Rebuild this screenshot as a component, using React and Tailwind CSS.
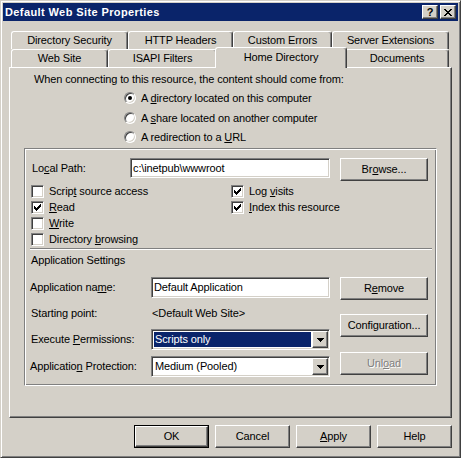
import React from "react";

const raised =
  "border border-t-white border-l-white border-r-[#404040] border-b-[#404040] shadow-[inset_-1px_-1px_#808080]";
const sunken =
  "border border-t-[#808080] border-l-[#808080] border-r-white border-b-white shadow-[inset_1px_1px_#404040,inset_-1px_-1px_#d4d0c8]";
const etched =
  "border border-t-[#808080] border-l-[#808080] border-r-white border-b-white shadow-[inset_1px_1px_#fff,inset_-1px_-1px_#808080]";

const topTabs = [
  { label: "Directory Security", w: "w-[117px]" },
  { label: "HTTP Headers", w: "w-[105px]" },
  { label: "Custom Errors", w: "w-[99px]" },
  { label: "Server Extensions", w: "w-[117px]" },
];

const bottomTabs = [
  { label: "Web Site", w: "w-[97px]" },
  { label: "ISAPI Filters", w: "w-[109px]" },
  { label: "Home Directory", w: "w-[132px]", active: true },
  { label: "Documents", w: "w-[104px]" },
];

const Tab = ({ label, w, active }) => (
  <div
    className={`${w} ${
      active ? "relative z-10 -mx-[2px] -mt-[2px] h-[21px] pb-[2px]" : "h-full"
    } bg-[#d4d0c8] border-t border-l border-r border-t-white border-l-white border-r-[#404040] shadow-[inset_-1px_0_#808080] rounded-t-[3px] flex items-center justify-center shrink-0`}
  >
    {label}
  </div>
);

const Button = ({ children, w = "w-[88px]", disabled, isDefault }) => (
  <div className={`${w} h-[23px] ${isDefault ? "border border-black" : ""}`}>
    <button
      type="button"
      className={`${raised} w-full h-full bg-[#d4d0c8] flex items-center justify-center ${
        disabled ? "text-[#808080] [text-shadow:1px_1px_0_#fff]" : "text-black"
      }`}
    >
      {children}
    </button>
  </div>
);

const Check = ({ checked }) => (
  <span className={`${sunken} w-[13px] h-[13px] bg-white shrink-0 flex items-center justify-center`}>
    {checked && (
      <svg width="7" height="7" viewBox="0 0 7 7" shapeRendering="crispEdges">
        <path
          d="M0 2h1v3H0zM1 3h1v3H1zM2 4h1v3H2zM3 3h1v3H3zM4 2h1v3H4zM5 1h1v3H5zM6 0h1v3H6z"
          fill="#000"
        />
      </svg>
    )}
  </span>
);

const Radio = ({ checked }) => (
  <span className="w-[12px] h-[12px] rounded-full bg-white border border-t-[#808080] border-l-[#808080] border-r-white border-b-white shadow-[inset_1px_1px_#404040,inset_-1px_-1px_#d4d0c8] flex items-center justify-center shrink-0">
    {checked && <span className="w-[4px] h-[4px] rounded-full bg-black" />}
  </span>
);

const Arrow = () => (
  <svg width="7" height="4" viewBox="0 0 7 4" shapeRendering="crispEdges">
    <path d="M0 0h7v1H0zM1 1h5v1H1zM2 2h3v1H2zM3 3h1v1H3z" fill="#000" />
  </svg>
);

const Combo = ({ value, selected }) => (
  <div className={`${sunken} w-[179px] h-[21px] bg-white flex items-center p-[1px]`}>
    <div
      className={`flex-1 h-[15px] m-[1px] flex items-center pl-[1px] ${
        selected ? "bg-[#0a246a] text-white" : ""
      }`}
    >
      {value}
    </div>
    <div className={`${raised} w-[16px] h-[17px] bg-[#d4d0c8] flex items-center justify-center`}>
      <Arrow />
    </div>
  </div>
);

const CheckRow = ({ checked, children }) => (
  <div className="h-[16px] flex items-center gap-[5px]">
    <Check checked={checked} />
    <span>{children}</span>
  </div>
);

const RadioRow = ({ checked, h, children }) => (
  <div className={`${h} flex items-center gap-[5px]`}>
    <Radio checked={checked} />
    <span>{children}</span>
  </div>
);

export default function App() {
  return (
    <div className="w-[461px] h-[458px] bg-[#d4d0c8] border border-t-[#d4d0c8] border-l-[#d4d0c8] border-r-[#404040] border-b-[#404040] shadow-[inset_1px_1px_#fff,inset_-1px_-1px_#808080] p-[2px] flex flex-col text-[11px] leading-[13px] tracking-[-0.12px] text-black font-['Liberation_Sans',Arial,sans-serif] select-none">
      {/* Title bar */}
      <div className="h-[18px] shrink-0 bg-[#0a246a] flex items-center px-[2px]">
        <span className="flex-1 text-white font-bold tracking-[0.4px]">Default Web Site Properties</span>
        <div className="flex gap-[2px]">
          <div className={`${raised} w-[16px] h-[14px] bg-[#d4d0c8] flex items-center justify-center font-bold leading-[11px]`}>
            ?
          </div>
          <div className={`${raised} w-[16px] h-[14px] bg-[#d4d0c8] flex items-center justify-center`}>
            <svg width="8" height="7" viewBox="0 0 8 7" shapeRendering="crispEdges">
              <path
                d="M0 0h2v1H0zM6 0h2v1H6zM1 1h2v1H1zM5 1h2v1H5zM2 2h4v1H2zM3 3h2v1H3zM2 4h4v1H2zM1 5h2v1H1zM5 5h2v1H5zM0 6h2v1H0zM6 6h2v1H6z"
                fill="#000"
              />
            </svg>
          </div>
        </div>
      </div>

      {/* Tabs */}
      <div className="mt-[10px] ml-[8px] flex h-[18px] shrink-0">
        {topTabs.map((t) => (
          <Tab key={t.label} {...t} />
        ))}
      </div>
      <div className="ml-[8px] flex h-[18px] shrink-0">
        {bottomTabs.map((t) => (
          <Tab key={t.label} {...t} />
        ))}
      </div>

      {/* Tab panel */}
      <div className="ml-[6px] w-[443px] h-[351px] shrink-0 border border-t-white border-l-white border-r-[#404040] border-b-[#404040] shadow-[inset_-1px_-1px_#808080] flex flex-col">
        <div className="mt-[5px] ml-[24px] h-[13px]">
          When connecting to this resource, the content should come from:
        </div>
        <div className="mt-[2px] ml-[114px] flex flex-col">
          <RadioRow checked h="h-[20px]">
            A <u>d</u>irectory located on this computer
          </RadioRow>
          <RadioRow h="h-[20px]">
            A <u>s</u>hare located on another computer
          </RadioRow>
          <RadioRow h="h-[18px]">
            A redirection to a <u>U</u>RL
          </RadioRow>
        </div>

        {/* Group box */}
        <div className={`${etched} mt-[2px] ml-[14px] w-[413px] h-[238px] flex flex-col`}>
          <div className="mt-[9px] h-[23px] flex items-start">
            <div className="ml-[7px] w-[98px] h-[20px] flex items-center">
              Lo<u>c</u>al Path:
            </div>
            <div className={`${sunken} w-[200px] h-[20px] bg-white flex items-center pl-[2px]`}>
              c:\inetpub\wwwroot
            </div>
            <div className="ml-[10px]">
              <Button>
                Br<u>o</u>wse...
              </Button>
            </div>
          </div>

          <div className="mt-[2px] ml-[6px] flex">
            <div className="w-[200px] flex flex-col">
              <CheckRow>
                Scrip<u>t</u> source access
              </CheckRow>
              <CheckRow checked>
                <u>R</u>ead
              </CheckRow>
              <CheckRow>
                <u>W</u>rite
              </CheckRow>
              <CheckRow>
                Directory <u>b</u>rowsing
              </CheckRow>
            </div>
            <div className="flex flex-col">
              <CheckRow checked>
                Log <u>v</u>isits
              </CheckRow>
              <CheckRow checked>
                <u>I</u>ndex this resource
              </CheckRow>
            </div>
          </div>

          <div className="mt-[1px] ml-[5px] w-[402px] h-[2px] border-t border-b border-t-[#808080] border-b-white" />

          <div className="mt-[4px] ml-[6px] h-[13px]">Application Settings</div>

          <div className="mt-[10px] flex">
            <div className="ml-[5px] flex flex-col">
              <div className="h-[21px] flex items-center">
                <span className="w-[121px]">
                  Application na<u>m</u>e:
                </span>
                <div className={`${sunken} w-[179px] h-[21px] bg-white flex items-center pl-[2px]`}>
                  Default Application
                </div>
              </div>
              <div className="mt-[5px] h-[21px] flex items-center">
                <span className="w-[121px] pl-[1px]">Starting point:</span>
                <span className="pl-[1px]">&lt;Default Web Site&gt;</span>
              </div>
              <div className="mt-[5px] h-[21px] flex items-center">
                <span className="w-[121px] pl-[1px]">
                  Execute <u>P</u>ermissions:
                </span>
                <Combo value="Scripts only" selected />
              </div>
              <div className="mt-[6px] h-[21px] flex items-center">
                <span className="w-[121px]">
                  Applicatio<u>n</u> Protection:
                </span>
                <Combo value="Medium (Pooled)" />
              </div>
            </div>
            <div className="ml-[10px] flex flex-col">
              <Button>
                R<u>e</u>move
              </Button>
              <div className="mt-[14px]">
                <Button>Configuration...</Button>
              </div>
              <div className="mt-[15px]">
                <Button disabled>
                  Unl<u>o</u>ad
                </Button>
              </div>
            </div>
          </div>
        </div>
      </div>

      {/* Dialog buttons */}
      <div className="mt-[7px] pr-[6px] flex justify-end gap-[6px]">
        <Button w="w-[75px]" isDefault>
          OK
        </Button>
        <Button w="w-[75px]">Cancel</Button>
        <Button w="w-[75px]">
          <u>A</u>pply
        </Button>
        <Button w="w-[75px]">Help</Button>
      </div>
    </div>
  );
}
